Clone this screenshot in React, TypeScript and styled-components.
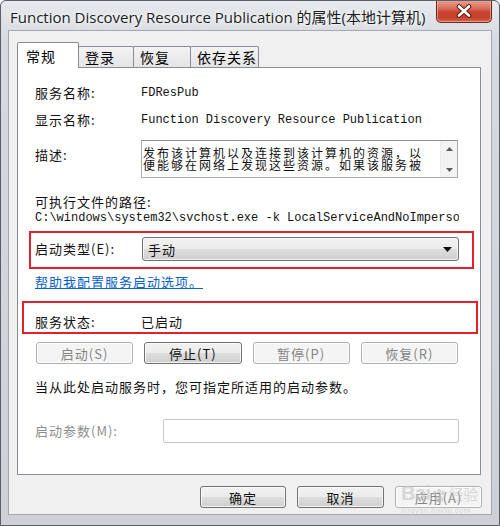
import React from "react";
import styled, { createGlobalStyle } from "styled-components";

const CJK = `"Noto Sans CJK SC", "Liberation Sans", sans-serif`;
const MONO = `"Liberation Mono", "Noto Sans CJK SC", monospace`;

const GlobalStyle = createGlobalStyle`
  html, body { margin: 0; padding: 0; background: #ffffff; }
  body { font-family: ${CJK}; }
  * { box-sizing: border-box; }
`;

const Window = styled.div`
  position: relative;
  width: 500px;
  height: 526px;
  border: 1px solid #5a5f66;
  border-radius: 6px 6px 0 0;
  background: linear-gradient(#e6e9ed, #d6dadf 40px, #cdd1d6);
  display: flex;
  flex-direction: column;
  overflow: hidden;
`;

const TitleBar = styled.div`
  height: 29px;
  flex: none;
  display: flex;
  align-items: flex-start;
  padding-left: 9px;
`;

const Title = styled.div`
  font-family: "Open Sans", "Noto Sans CJK SC", sans-serif;
  font-size: 15px;
  line-height: 18px;
  margin-top: 7px;
  color: #1b1b1b;
  white-space: nowrap;
  text-shadow: 0 0 6px #ffffff, 0 0 3px #ffffff;
`;

const CloseButton = styled.div`
  margin-left: auto;
  margin-right: 7px;
  margin-top: -1px;
  width: 56px;
  height: 23px;
  border: 1px solid #6e2219;
  border-top: none;
  border-radius: 0 0 5px 5px;
  background: linear-gradient(#e9a597 0%, #d9725f 35%, #c8432d 55%, #c5432c 80%, #d2644a 100%);
  box-shadow: inset 0 0 0 1px rgba(255, 210, 200, 0.5);
  display: flex;
  align-items: center;
  justify-content: center;
`;

const Client = styled.div`
  flex: 1;
  margin: 0 7px 10px 7px;
  border: 1px solid #a3a8ae;
  background: #f0f0f0;
  padding: 11px 10px 6px 8px;
  display: flex;
  flex-direction: column;
`;

const TabStrip = styled.div`
  display: flex;
  align-items: flex-end;
  height: 25px;
  flex: none;
`;

const Tab = styled.div<{ $w: number; $active?: boolean }>`
  position: relative;
  z-index: ${(p) => (p.$active ? 2 : 1)};
  width: ${(p) => p.$w + 1}px;
  margin-right: -1px;
  height: ${(p) => (p.$active ? 26 : 21)}px;
  margin-bottom: ${(p) => (p.$active ? -1 : 0)}px;
  border: 1px solid #898c95;
  border-bottom: none;
  border-radius: 2px 2px 0 0;
  background: ${(p) => (p.$active ? "#ffffff" : "linear-gradient(#f3f3f3, #e4e4e4)")};
  padding-left: ${(p) => (p.$active ? 8 : 6)}px;
  padding-top: ${(p) => (p.$active ? 4 : 1)}px;
  font-size: 14px;
  line-height: 18px;
  letter-spacing: 1px;
  color: #000;
  white-space: nowrap;
`;

const Panel = styled.div`
  height: 408px;
  flex: none;
  background: #ffffff;
  border: 1px solid #898c95;
  padding: 15px 21px 0 17px;
  display: flex;
  flex-direction: column;
`;

const InfoRow = styled.div<{ $mt?: number; $h?: number }>`
  display: grid;
  grid-template-columns: 106px 1fr;
  align-items: center;
  margin-top: ${(p) => p.$mt ?? 0}px;
  min-height: ${(p) => p.$h ?? 20}px;
`;

const TopRow = styled(InfoRow)`
  align-items: start;
`;

const Label = styled.div<{ $dim?: boolean; $pt?: number }>`
  font-family: ${CJK};
  font-size: 13px;
  letter-spacing: 1px;
  line-height: 20px;
  color: ${(p) => (p.$dim ? "#8e8e8e" : "#111")};
  padding-top: ${(p) => p.$pt ?? 0}px;
  white-space: nowrap;
`;

const MonoValue = styled.div`
  font-family: ${MONO};
  font-size: 12px;
  line-height: 20px;
  color: #111;
  white-space: nowrap;
`;

const TextLine = styled.div<{ $mt?: number; $lh?: number }>`
  margin-top: ${(p) => p.$mt ?? 0}px;
  font-family: ${CJK};
  font-size: 13px;
  letter-spacing: 1px;
  line-height: ${(p) => p.$lh ?? 18}px;
  color: #111;
  white-space: nowrap;
`;

const PathLine = styled.div`
  font-family: ${MONO};
  font-size: 12px;
  line-height: 14px;
  height: 14px;
  color: #111;
  white-space: nowrap;
  overflow: hidden;
`;

const DescBox = styled.div`
  width: 317px;
  height: 38px;
  border: 1px solid #abadb3;
  border-top-color: #8e9096;
  display: flex;
  background: #fff;
`;

const DescText = styled.div`
  flex: 1;
  padding: 6px 0 0 1px;
  height: 36px;
  overflow: hidden;
`;

const DescInner = styled.div`
  width: 290px;
  height: 24px;
  overflow: hidden;
  font-family: ${CJK};
  font-size: 12px;
  line-height: 12px;
  letter-spacing: 2px;
  color: #111;
`;

const ScrollBar = styled.div`
  width: 17px;
  background: #f3f3f3;
  border-left: 1px solid #ececec;
  display: flex;
  flex-direction: column;
  justify-content: space-between;
  align-items: center;
  padding: 6px 0 5px;
`;

const RedBox = styled.div<{ $l: number; $r: number; $pt: number; $pb: number; $mt: number }>`
  margin: ${(p) => p.$mt}px -${(p) => p.$r}px 0 -${(p) => p.$l}px;
  border: 2px solid #e3202b;
  padding: ${(p) => p.$pt}px ${(p) => p.$r - 2}px ${(p) => p.$pb}px ${(p) => p.$l - 2}px;
`;

const Combo = styled.div`
  margin-left: 1px;
  height: 24px;
  border: 1px solid #707070;
  border-radius: 3px;
  background: linear-gradient(#f2f2f2 0%, #ebebeb 50%, #dddddd 51%, #cfcfcf 100%);
  box-shadow: inset 0 0 0 1px rgba(255, 255, 255, 0.7);
  display: flex;
  align-items: center;
  padding: 0 6px 0 5px;
  font-family: ${CJK};
  font-size: 13px;
  letter-spacing: 1px;
  color: #111;
`;

const ComboText = styled.span`
  flex: 1;
`;

const Link = styled.a`
  margin-top: 4px;
  align-self: flex-start;
  font-family: ${CJK};
  font-size: 13px;
  letter-spacing: 1px;
  line-height: 18px;
  color: #0a5fc8;
  text-decoration: underline;
  cursor: pointer;
`;

const StatusRow = styled.div`
  display: grid;
  grid-template-columns: 106px 1fr;
  font-family: ${CJK};
  font-size: 13px;
  letter-spacing: 1px;
  line-height: 18px;
  color: #111;
`;

const ButtonRow = styled.div`
  margin-top: 8px;
  display: grid;
  grid-template-columns: repeat(4, 1fr);
  column-gap: 11px;
  padding: 0 1px;
`;

const Btn = styled.div<{ $off?: boolean; $w?: number }>`
  height: 22px;
  width: ${(p) => (p.$w ? `${p.$w}px` : "auto")};
  border-radius: 3px;
  border: 1px solid ${(p) => (p.$off ? "#adb2b5" : "#707070")};
  background: ${(p) =>
    p.$off ? "#f4f4f4" : "linear-gradient(#f2f2f2 0%, #ebebeb 50%, #dddddd 51%, #cfcfcf 100%)"};
  box-shadow: inset 0 0 0 1px rgba(255, 255, 255, 0.75);
  color: ${(p) => (p.$off ? "#848484" : "#111")};
  font-family: ${CJK};
  font-size: 13px;
  letter-spacing: 1px;
  display: flex;
  align-items: center;
  justify-content: center;
  white-space: nowrap;
`;

const ParamRow = styled.div`
  margin-top: 23px;
  display: grid;
  grid-template-columns: 128px 1fr;
  align-items: center;
`;

const ParamInput = styled.div`
  height: 24px;
  border: 1px solid #c4c6c9;
  border-radius: 2px;
  background: #fff;
`;

const Footer = styled.div`
  margin-top: 11px;
  margin-right: -1px;
  display: flex;
  justify-content: flex-end;
  gap: 11px;
`;

const Watermark = styled.div`
  position: absolute;
  left: 400px;
  top: 481px;
  width: 80px;
  pointer-events: none;
  color: rgba(190, 190, 190, 0.55);
  font-family: "Liberation Sans", "Noto Sans CJK SC", sans-serif;
`;

const WmTop = styled.div`
  display: flex;
  align-items: flex-end;
  font-size: 20px;
  font-weight: bold;
  line-height: 22px;
  letter-spacing: -0.5px;
`;

const WmSmall = styled.div`
  font-size: 8px;
  line-height: 10px;
  margin-top: 2px;
  letter-spacing: 0.3px;
`;

const WmCjk = styled.span`
  font-family: "Noto Sans CJK SC", sans-serif;
  font-size: 15px;
  font-weight: normal;
  margin-left: 2px;
  line-height: 20px;
`;

const CloseX = () => (
  <svg width="16" height="14" viewBox="0 0 16 14">
    <path d="M3 2.5 L13 11.5 M13 2.5 L3 11.5" stroke="#5a1a12" strokeWidth="4.6" strokeLinecap="round" />
    <path d="M3 2.5 L13 11.5 M13 2.5 L3 11.5" stroke="#ffffff" strokeWidth="2.6" strokeLinecap="round" />
  </svg>
);

const Arrow = ({ up }: { up?: boolean }) => (
  <svg width="7" height="4" viewBox="0 0 7 4">
    <path d={up ? "M0 4 L3.5 0 L7 4 Z" : "M0 0 L7 0 L3.5 4 Z"} fill="#5a5a5a" />
  </svg>
);

const DropArrow = () => (
  <svg width="9" height="5" viewBox="0 0 9 5">
    <path d="M0 0 L9 0 L4.5 5 Z" fill="#111" />
  </svg>
);

const Paw = () => (
  <svg width="16" height="16" viewBox="0 0 16 16">
    <g fill="rgba(190,190,190,0.6)">
      <ellipse cx="4" cy="5" rx="1.8" ry="2.3" />
      <ellipse cx="8" cy="3" rx="1.8" ry="2.3" />
      <ellipse cx="12" cy="5" rx="1.8" ry="2.3" />
      <ellipse cx="8" cy="11" rx="4" ry="3.5" />
    </g>
  </svg>
);

const description =
  "发布该计算机以及连接到该计算机的资源，以便能够在网络上发现这些资源。如果该服务被停止，将不再发布这些资源，网络上的其他计算机将无法发现它们。";

export default function App() {
  return (
    <>
      <GlobalStyle />
      <Window>
        <TitleBar>
          <Title>Function Discovery Resource Publication 的属性(本地计算机)</Title>
          <CloseButton>
            <CloseX />
          </CloseButton>
        </TitleBar>
        <Client>
          <TabStrip>
            <Tab $w={61} $active>常规</Tab>
            <Tab $w={55}>登录</Tab>
            <Tab $w={57}>恢复</Tab>
            <Tab $w={68}>依存关系</Tab>
          </TabStrip>
          <Panel>
            <InfoRow>
              <Label>服务名称:</Label>
              <MonoValue>FDResPub</MonoValue>
            </InfoRow>
            <InfoRow $mt={7}>
              <Label>显示名称:</Label>
              <MonoValue>Function Discovery Resource Publication</MonoValue>
            </InfoRow>
            <TopRow $mt={10}>
              <Label $pt={5}>描述:</Label>
              <DescBox>
                <DescText>
                  <DescInner>{description}</DescInner>
                </DescText>
                <ScrollBar>
                  <Arrow up />
                  <Arrow />
                </ScrollBar>
              </DescBox>
            </TopRow>
            <TextLine $mt={15}>可执行文件的路径:</TextLine>
            <PathLine>C:\windows\system32\svchost.exe -k LocalServiceAndNoImpersonation</PathLine>
            <RedBox $l={6} $r={15} $pt={4} $pb={6} $mt={6}>
              <InfoRow $h={24}>
                <Label>启动类型(E):</Label>
                <Combo>
                  <ComboText>手动</ComboText>
                  <DropArrow />
                </Combo>
              </InfoRow>
            </RedBox>
            <Link>帮助我配置服务启动选项。</Link>
            <RedBox $l={13} $r={19} $pt={10} $pb={1} $mt={10}>
              <StatusRow>
                <span>服务状态:</span>
                <span>已启动</span>
              </StatusRow>
            </RedBox>
            <ButtonRow>
              <Btn $off>启动(S)</Btn>
              <Btn>停止(T)</Btn>
              <Btn $off>暂停(P)</Btn>
              <Btn $off>恢复(R)</Btn>
            </ButtonRow>
            <TextLine $mt={14}>当从此处启动服务时，您可指定所适用的启动参数。</TextLine>
            <ParamRow>
              <Label $dim>启动参数(M):</Label>
              <ParamInput />
            </ParamRow>
          </Panel>
          <Footer>
            <Btn $w={86}>确定</Btn>
            <Btn $w={87}>取消</Btn>
            <Btn $w={87} $off>应用(A)</Btn>
          </Footer>
        </Client>
        <Watermark>
          <WmTop>
            Bai
            <Paw />
            <WmCjk>经验</WmCjk>
          </WmTop>
          <WmSmall>jingyan.baidu.com</WmSmall>
        </Watermark>
      </Window>
    </>
  );
}
